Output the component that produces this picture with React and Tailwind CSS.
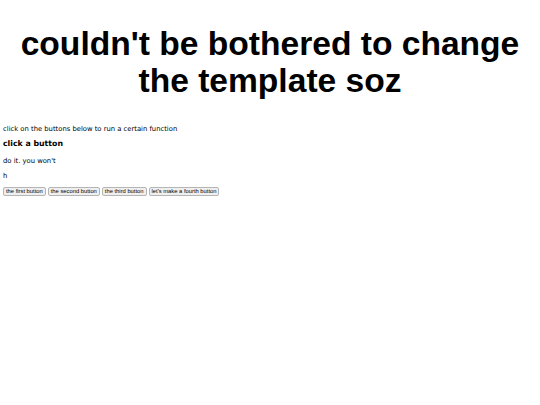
import React from 'react';

const buttons = ['the first button', 'the second button', 'the third button', "let's make a fourth button"];

export default function App() {
  return (
    <div className="min-h-[405px] bg-white text-black font-['DejaVu_Sans',sans-serif]">
      <h1 className="pt-[25px] text-center font-['Liberation_Sans',Arial,sans-serif] text-[33.6px] font-bold leading-[37px]">
        couldn't be bothered to change
        <br />
        the template soz
      </h1>
      <div className="px-[3px] pt-[25px]">
        <p className="text-[6.8px] leading-[10px]">click on the buttons below to run a certain function</p>
        <h3 className="mt-[4px] text-[7.8px] font-bold leading-[12px]">click a button</h3>
        <p className="mt-[6px] text-[6.8px] leading-[10px]">do it. you won't</p>
        <p className="mt-[5px] text-[6.8px] leading-[10px]">h</p>
        <div className="mt-[6px] flex gap-[2px]">
          {buttons.map((label) => (
            <button
              key={label}
              type="button"
              className="h-[9px] rounded-[2px] border border-[#b5b5b5] bg-[#efefef] px-[2px] font-['Liberation_Sans',Arial,sans-serif] text-[5.8px] leading-[7px] text-black"
            >
              {label}
            </button>
          ))}
        </div>
      </div>
    </div>
  );
}
